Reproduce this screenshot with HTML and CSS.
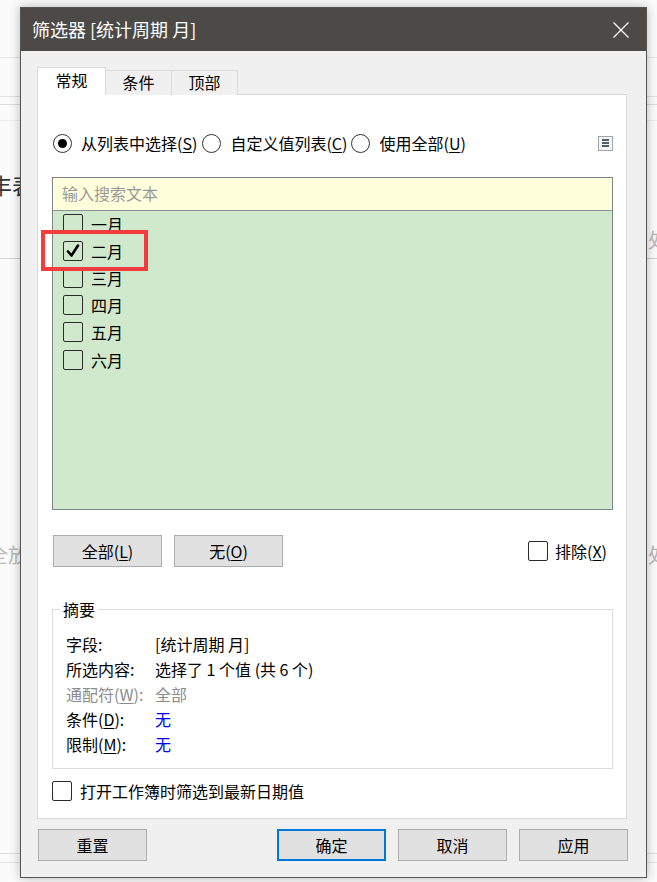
FILE: index.html
```html
<!DOCTYPE html>
<html lang="zh">
<head>
<meta charset="utf-8">
<title>筛选器</title>
<link rel="stylesheet" href="styles.css">
</head>
<body>
<div class="backdrop">
  <div class="bg-line bl1"></div>
  <div class="bg-line bl2"></div>
  <div class="bg-line bl3"></div>
  <div class="bg-line bl4"></div>
  <div class="bg-line bl5"></div>
  <div class="bg-line bl6"></div>
  <div class="bg-line bl7"></div>
  <span class="bg-text bt1">丰表</span>
  <span class="bg-text bt2">全放</span>
  <span class="bg-text bt3">处</span>
  <span class="bg-text bt4">处</span>
</div>

<div class="dialog">
  <div class="titlebar">
    <span class="title">筛选器 [统计周期 月]</span>
    <svg class="close" width="18" height="18" viewBox="0 0 18 18"><path d="M1.5 1.5 L16.5 16.5 M16.5 1.5 L1.5 16.5" stroke="#ffffff" stroke-width="1.3" fill="none"/></svg>
  </div>
  <div class="body">
    <div class="tabs">
      <div class="tab active">常规</div>
      <div class="tab">条件</div>
      <div class="tab">顶部</div>
    </div>
    <div class="panel">
      <div class="radio-row">
        <label class="radio"><span class="rb checked"></span><span>从列表中选择(<u>S</u>)</span></label>
        <label class="radio r2"><span class="rb"></span><span>自定义值列表(<u>C</u>)</span></label>
        <label class="radio r3"><span class="rb"></span><span>使用全部(<u>U</u>)</span></label>
        <span class="menu-icon"><span></span><span></span><span></span></span>
      </div>

      <div class="listbox">
        <div class="search">输入搜索文本</div>
        <div class="items">
          <div class="item"><span class="cb"></span><span>一月</span></div>
          <div class="item"><span class="cb"><svg width="16" height="16" viewBox="0 0 16 16"><path d="M3 8.5 L6.5 12.5 L13 2.5" stroke="#000" stroke-width="2.6" fill="none" stroke-linecap="round" stroke-linejoin="round"/></svg></span><span>二月</span></div>
          <div class="item"><span class="cb"></span><span>三月</span></div>
          <div class="item"><span class="cb"></span><span>四月</span></div>
          <div class="item"><span class="cb"></span><span>五月</span></div>
          <div class="item"><span class="cb"></span><span>六月</span></div>
          <div class="highlight"></div>
        </div>
      </div>

      <div class="btn-row">
        <button class="btn">全部(<u>L</u>)</button>
        <button class="btn">无(<u>O</u>)</button>
        <label class="exclude"><span class="cb"></span><span>排除(<u>X</u>)</span></label>
      </div>

      <div class="group">
        <span class="legend">摘要</span>
        <div class="grow"><span class="k">字段:</span><span class="v">[统计周期 月]</span></div>
        <div class="grow"><span class="k">所选内容:</span><span class="v">选择了 1 个值 (共 6 个)</span></div>
        <div class="grow muted"><span class="k">通配符(<u>W</u>):</span><span class="v">全部</span></div>
        <div class="grow"><span class="k">条件(<u>D</u>):</span><span class="v blue">无</span></div>
        <div class="grow"><span class="k">限制(<u>M</u>):</span><span class="v blue">无</span></div>
      </div>

      <label class="latest"><span class="cb"></span><span>打开工作簿时筛选到最新日期值</span></label>
    </div>

    <div class="footer">
      <button class="btn">重置</button>
      <div class="footer-right">
        <button class="btn primary">确定</button>
        <button class="btn">取消</button>
        <button class="btn">应用</button>
      </div>
    </div>
  </div>
</div>
</body>
</html>
```

FILE: styles.css
```css
* { box-sizing: border-box; }

html, body {
  margin: 0;
  padding: 0;
}

body {
  width: 657px;
  height: 882px;
  overflow: hidden;
  background: #fbfbfb;
  font-family: "Noto Sans CJK SC", "Noto Sans", sans-serif;
  color: #000;
  position: relative;
}

.backdrop {
  position: absolute;
  inset: 0;
}

.bg-line {
  position: absolute;
  left: 0;
  right: 0;
  height: 1px;
  background: #d6d6d6;
}
.bl1 { top: 57px; background: #e6e6e6; }
.bl2 { top: 96px; background: #e2e2e2; }
.bl3 { top: 104px; background: #dcdcdc; }
.bl4 { top: 258px; background: #d2d2d2; }
.bl5 { top: 853px; background: #dcdcdc; }
.bl6 { top: 862px; background: #e4e4e4; }
.bl7 { top: 120px; background: #eeeeee; }

.bg-text {
  position: absolute;
  font-size: 22px;
  line-height: 1;
}
.bt1 { left: -10px; top: 173px; color: #333; }
.bt2 { left: -12px; top: 545px; color: #b8b8b8; font-size: 20px; }
.bt3 { left: 648px; top: 230px; color: #b8b8b8; font-size: 20px; }
.bt4 { left: 648px; top: 545px; color: #b8b8b8; font-size: 20px; }

.dialog {
  position: absolute;
  left: 20px;
  top: 7px;
  width: 627px;
  height: 871px;
  background: #f0f0f0;
  border: 1px solid #555555;
  box-shadow: 0 0 10px rgba(0, 0, 0, 0.28);
  display: flex;
  flex-direction: column;
}

.titlebar {
  height: 43px;
  background: #4b4a47;
  display: flex;
  align-items: center;
  justify-content: space-between;
  padding: 0 16px 0 11px;
  flex: none;
}

.title {
  color: #ffffff;
  font-size: 18px;
  line-height: 24px;
  margin-top: -2px;
}

.close { display: block; }

.body {
  padding: 16px 19px 0 16px;
  display: flex;
  flex-direction: column;
}

.tabs {
  display: flex;
  align-items: flex-end;
  height: 28px;
  position: relative;
  z-index: 1;
  margin-bottom: -1px;
}

.tab {
  height: 25px;
  width: 67px;
  border: 1px solid #d9d9d9;
  border-bottom: none;
  background: #f0f0f0;
  font-size: 16px;
  line-height: 22px;
  text-align: center;
  margin-left: -1px;
}

.tab.active {
  height: 28px;
  width: 69px;
  margin-left: 0;
  background: #ffffff;
  line-height: 24px;
  z-index: 2;
}

.panel {
  background: #ffffff;
  border: 1px solid #d9d9d9;
  height: 725px;
  padding: 37px 13px 0 14px;
  display: flex;
  flex-direction: column;
}

.radio-row {
  display: flex;
  align-items: center;
  height: 22px;
  font-size: 16px;
  padding-left: 1px;
}

.radio {
  display: flex;
  align-items: center;
  gap: 9px;
  white-space: nowrap;
}
.r2 { margin-left: 5px; }
.r3 { margin-left: 4px; }

.rb {
  width: 19px;
  height: 19px;
  border: 1.5px solid #333;
  border-radius: 50%;
  display: flex;
  align-items: center;
  justify-content: center;
  background: #fff;
  flex: none;
}
.rb.checked::after {
  content: "";
  width: 9px;
  height: 9px;
  border-radius: 50%;
  background: #000;
}

u { text-decoration: underline; text-underline-offset: 2px; }

.menu-icon {
  margin-left: auto;
  margin-right: 0;
  width: 15px;
  height: 15px;
  border: 1px solid #9da3a8;
  background: #f5f5f5;
  display: flex;
  flex-direction: column;
  justify-content: center;
  align-items: center;
  gap: 1.5px;
}
.menu-icon span {
  width: 7px;
  height: 1.5px;
  background: #4f5d6b;
}

.listbox {
  margin-top: 23px;
  height: 333px;
  border: 1px solid #7e858c;
  display: flex;
  flex-direction: column;
}

.search {
  height: 33px;
  background: #ffffdc;
  border-bottom: 1px solid #8b9196;
  color: #999999;
  font-size: 16px;
  line-height: 31px;
  padding-left: 9px;
  flex: none;
}

.items {
  flex: 1;
  background: #d0e8cb;
  position: relative;
  padding-top: 0;
}

.item {
  height: 27.2px;
  display: flex;
  align-items: center;
  gap: 8px;
  padding-left: 10px;
  padding-bottom: 2px;
  font-size: 16px;
  line-height: 20px;
}

.cb {
  width: 20px;
  height: 20px;
  border: 1.5px solid #2b2b2b;
  border-radius: 2px;
  display: flex;
  align-items: center;
  justify-content: center;
  flex: none;
}
.cb svg { display: block; }

.highlight {
  position: absolute;
  left: -12px;
  top: 19px;
  width: 107px;
  height: 41px;
  border: 4px solid #f43c3c;
}

.btn-row {
  margin-top: 25px;
  display: flex;
  align-items: center;
  gap: 12px;
  height: 32px;
  padding-left: 1px;
}

.btn {
  width: 109px;
  height: 32px;
  background: #e1e1e1;
  border: 1px solid #adadad;
  font-family: "Noto Sans CJK SC", "Noto Sans", sans-serif;
  font-size: 16px;
  color: #000;
  padding: 0;
  line-height: 28px;
}

.exclude {
  margin-left: auto;
  margin-right: 6px;
  display: flex;
  align-items: center;
  gap: 7px;
  font-size: 16px;
}

.group {
  margin-top: 42px;
  border: 1px solid #dcdcdc;
  height: 160px;
  position: relative;
  padding: 21px 0 0 13px;
}

.legend {
  position: absolute;
  left: 7px;
  top: -12px;
  background: #fff;
  padding: 0 3px;
  font-size: 16px;
  line-height: 22px;
}

.grow {
  display: flex;
  height: 25px;
  align-items: center;
  font-size: 16px;
}
.k { width: 89px; flex: none; }
.muted { color: #8c8c8c; }
.blue { color: #0000ee; }

.latest {
  margin-top: 12px;
  display: flex;
  align-items: center;
  gap: 8px;
  font-size: 16px;
  height: 20px;
}

.footer {
  margin-top: 10px;
  display: flex;
  justify-content: space-between;
  padding-left: 1px;
  margin-right: -1px;
}

.footer-right {
  display: flex;
  gap: 12px;
}

.btn.primary {
  border: 2px solid #0078d7;
  line-height: 26px;
}
```
